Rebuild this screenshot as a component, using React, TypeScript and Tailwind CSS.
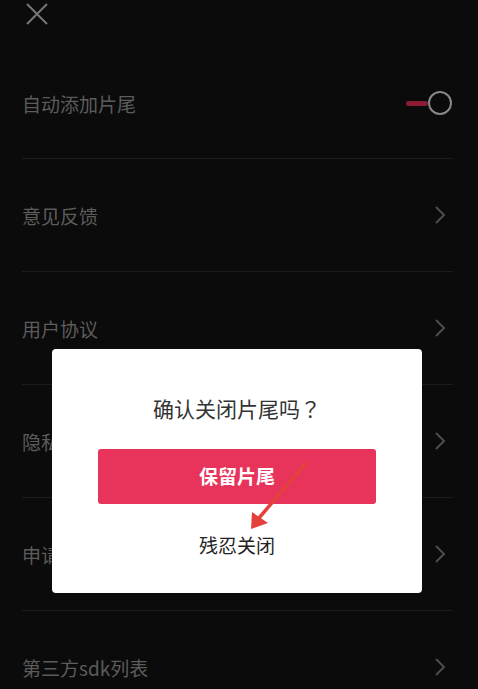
import React from "react";

const rows = ["意见反馈", "用户协议", "隐私政策", "申请权限", "第三方sdk列表"];

function Chevron() {
  return (
    <svg width="12" height="20" viewBox="0 0 12 20" className="shrink-0">
      <path d="M2 2 L10 10 L2 18" fill="none" stroke="#4d4d4d" strokeWidth="2" />
    </svg>
  );
}

export default function App() {
  return (
    <div
      className="relative w-[478px] h-[689px] overflow-hidden bg-[#0b0b0b]"
      style={{ fontFamily: '"Noto Sans CJK SC", "Noto Sans", sans-serif' }}
    >
      <div className="h-[46px] pl-[26px] pt-[3px]">
        <svg width="22" height="22" viewBox="0 0 22 22">
          <path d="M1 1 L21 21 M21 1 L1 21" stroke="#767676" strokeWidth="2" />
        </svg>
      </div>
      <div className="ml-[22px] mr-[25px]">
        <div className="h-[112px] flex items-center justify-between border-b border-[#1c1c1c] box-content">
          <span className="text-[19px] text-[#5c5c5c] pt-[4px]">自动添加片尾</span>
          <div className="flex items-center pt-[2px] pr-px">
            <div className="w-[22px] h-[5px] rounded-full bg-[#8a1c36]" />
            <div className="w-[24px] h-[24px] rounded-full border-2 border-[#888888]" />
          </div>
        </div>
        {rows.map((r, i) => (
          <div
            key={r}
            className={
              "h-[112px] flex items-center justify-between box-content " +
              (i < rows.length - 1 ? "border-b border-[#1c1c1c]" : "")
            }
          >
            <span className="text-[19px] text-[#5c5c5c] pt-[2px]">{r}</span>
            <div className="pr-[7px]">
              <Chevron />
            </div>
          </div>
        ))}
      </div>

      <div className="absolute left-[52px] top-[349px] w-[370px] h-[244px] bg-white rounded-[4px] flex flex-col items-center">
        <div className="mt-[45px] h-[28px] leading-[28px] text-[21px] text-[#333333]">
          确认关闭片尾吗<span style={{ fontFamily: '"Noto Sans CJK JP", sans-serif' }}>？</span>
        </div>
        <div className="mt-[27px] w-[278px] h-[55px] rounded-[3px] bg-[#e8345b] flex items-center justify-center text-white text-[19px] font-bold">
          保留片尾
        </div>
        <div className="mt-[27px] h-[28px] leading-[28px] text-[19px] text-[#222222]">残忍关闭</div>
      </div>

      <svg className="absolute left-0 top-0 pointer-events-none" width="478" height="689" viewBox="0 0 478 689">
        <path d="M305 464 L259 518" stroke="#e5403b" strokeWidth="3.5" strokeLinecap="round" />
        <polygon points="251,529 252,512 268,523" fill="#e5403b" />
      </svg>
    </div>
  );
}
